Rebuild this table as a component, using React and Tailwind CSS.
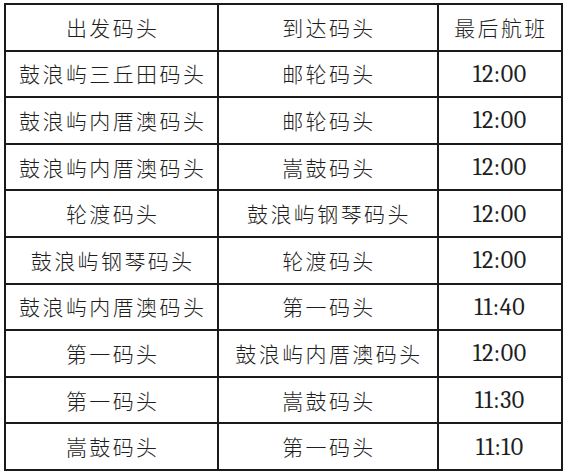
import React from 'react';

const rows = [
  ['鼓浪屿三丘田码头', '邮轮码头', '12:00'],
  ['鼓浪屿内厝澳码头', '邮轮码头', '12:00'],
  ['鼓浪屿内厝澳码头', '嵩鼓码头', '12:00'],
  ['轮渡码头', '鼓浪屿钢琴码头', '12:00'],
  ['鼓浪屿钢琴码头', '轮渡码头', '12:00'],
  ['鼓浪屿内厝澳码头', '第一码头', '11:40'],
  ['第一码头', '鼓浪屿内厝澳码头', '12:00'],
  ['第一码头', '嵩鼓码头', '11:30'],
  ['嵩鼓码头', '第一码头', '11:10'],
];

const cjk = "font-['Noto_Sans_CJK_SC',sans-serif] font-light text-[21px] tracking-[2.4px] pl-[2.4px]";
const num = 'font-serif font-normal text-[24px] tracking-[0.6px]';
const cell = 'flex items-center justify-center h-[46.6px] border-r-2 border-b-2 border-[#1a1a1a] text-[#1e1e1e] leading-none';

function Cell({ children, digits }) {
  return <div className={cell}><span className={digits ? num : cjk}>{children}</span></div>;
}

export default function App() {
  return (
    <div className="w-[568px] h-[476px] bg-white pt-[3px] pl-[4px]">
      <div className="grid grid-cols-[213px_219.5px_1fr] w-[559px] border-l-2 border-t-2 border-[#1a1a1a]">
        <Cell>出发码头</Cell>
        <Cell>到达码头</Cell>
        <Cell>最后航班</Cell>
        {rows.map((r, i) => (
          <React.Fragment key={i}>
            <Cell>{r[0]}</Cell>
            <Cell>{r[1]}</Cell>
            <Cell digits>{r[2]}</Cell>
          </React.Fragment>
        ))}
      </div>
    </div>
  );
}
